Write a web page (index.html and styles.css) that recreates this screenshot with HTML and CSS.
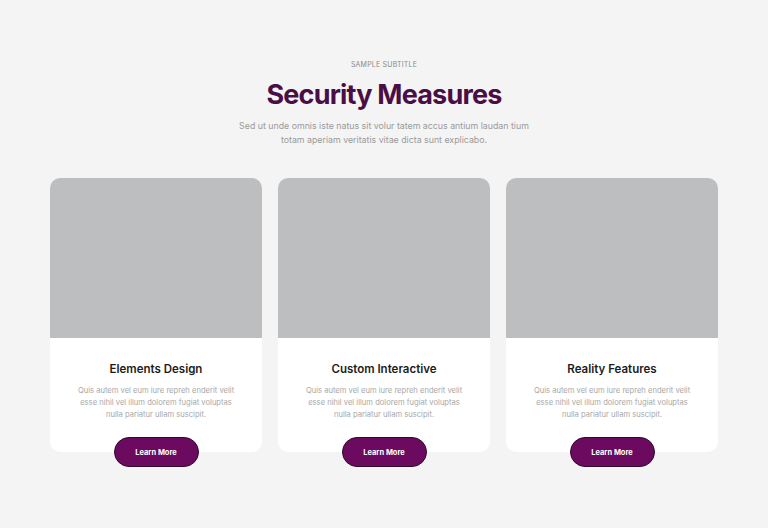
FILE: index.html
```html
<!DOCTYPE html>
<html lang="en">
<head>
    <meta charset="UTF-8">
    <meta name="viewport" content="width=device-width, initial-scale=1.0">
    <title>Security Measures</title>
    <link rel="stylesheet" href="styles.css">
</head>
<body>
    <section class="seccion">
        <p class="subtitulo">SAMPLE SUBTITLE</p>
        <h1 class="titulo">Security Measures</h1>
        <p class="intro">Sed ut unde omnis iste natus sit volur tatem accus antium laudan tium totam aperiam veritatis vitae dicta sunt explicabo.</p>

        <div class="tarjetas">
            <div class="tarjeta">
                <div class="imagen"></div>
                <div class="cuerpo">
                    <h3>Elements Design</h3>
                    <p>Quis autem vel eum iure repreh enderit velit esse nihil vel illum dolorem fugiat voluptas nulla pariatur ullam suscipit.</p>
                </div>
                <button class="boton">Learn More</button>
            </div>
            <div class="tarjeta">
                <div class="imagen"></div>
                <div class="cuerpo">
                    <h3>Custom Interactive</h3>
                    <p>Quis autem vel eum iure repreh enderit velit esse nihil vel illum dolorem fugiat voluptas nulla pariatur ullam suscipit.</p>
                </div>
                <button class="boton">Learn More</button>
            </div>
            <div class="tarjeta">
                <div class="imagen"></div>
                <div class="cuerpo">
                    <h3>Reality Features</h3>
                    <p>Quis autem vel eum iure repreh enderit velit esse nihil vel illum dolorem fugiat voluptas nulla pariatur ullam suscipit.</p>
                </div>
                <button class="boton">Learn More</button>
            </div>
        </div>
    </section>
</body>
</html>
```

FILE: styles.css
```css
body {
    margin: 0;
    background: #f4f4f5;
    font-family: Inter, "Noto Sans", sans-serif;
    color: #222;
}
.seccion {
    padding: 60px 50px 40px;
    text-align: center;
}
.subtitulo {
    margin: 0;
    font-size: 7px;
    line-height: 10px;
    color: #888;
    letter-spacing: 0.2px;
}
.titulo {
    margin: 8px 0 0;
    font-size: 27px;
    line-height: 34px;
    font-weight: 700;
    letter-spacing: -0.8px;
    color: #4a0e46;
}
.intro {
    width: 300px;
    margin: 7px auto 0;
    font-size: 8.8px;
    line-height: 14px;
    color: #9a9a9a;
}
.tarjetas {
    display: grid;
    grid-template-columns: repeat(3, 1fr);
    gap: 16px;
    margin-top: 31px;
}
.tarjeta {
    display: flex;
    flex-direction: column;
    align-items: center;
    background: #fff;
    border-radius: 10px;
}
.imagen {
    align-self: stretch;
    height: 160px;
    background: #bdbec0;
    border-radius: 10px 10px 0 0;
}
.cuerpo {
    padding: 23px 26px 0;
}
.cuerpo h3 {
    margin: 0;
    font-size: 11.5px;
    line-height: 16px;
    font-weight: 600;
    color: #1c1c1c;
}
.cuerpo p {
    margin: 8px 0 0;
    font-size: 7.6px;
    line-height: 12px;
    color: #a8a8a8;
}
.boton {
    width: 85px;
    height: 30px;
    margin: 16px 0 -15px;
    border: 1.5px solid #2e0a2c;
    border-radius: 15px;
    background: #6b0a5e;
    color: #fff;
    font-family: inherit;
    font-size: 7.5px;
    font-weight: 700;
    cursor: pointer;
}
```
